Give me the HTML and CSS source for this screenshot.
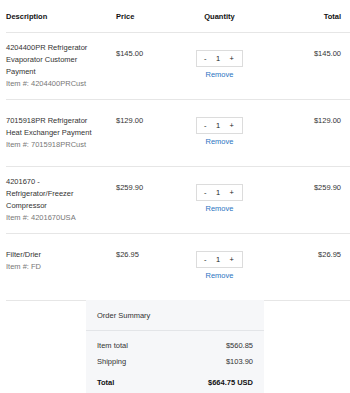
FILE: index.html
```html
<!DOCTYPE html>
<html lang="en">
<head>
  <meta charset="UTF-8" />
  <meta name="viewport" content="width=device-width, initial-scale=1" />
  <title>Cart</title>
  <link rel="stylesheet" href="styles.css">
</head>
<body>
  <div class="cart">
    <div class="row head">
      <div class="desc">Description</div>
      <div class="price">Price</div>
      <div class="qty">Quantity</div>
      <div class="total">Total</div>
    </div>

    <div class="row">
      <div class="desc">
        <div class="name">4204400PR Refrigerator Evaporator Customer Payment</div>
        <div class="sku">Item #: 4204400PRCust</div>
      </div>
      <div class="price">$145.00</div>
      <div class="qty">
        <div class="stepper"><span>-</span><span>1</span><span>+</span></div>
        <a href="#" class="remove">Remove</a>
      </div>
      <div class="total">$145.00</div>
    </div>

    <div class="row">
      <div class="desc">
        <div class="name">7015918PR Refrigerator Heat Exchanger Payment</div>
        <div class="sku">Item #: 7015918PRCust</div>
      </div>
      <div class="price">$129.00</div>
      <div class="qty">
        <div class="stepper"><span>-</span><span>1</span><span>+</span></div>
        <a href="#" class="remove">Remove</a>
      </div>
      <div class="total">$129.00</div>
    </div>

    <div class="row">
      <div class="desc">
        <div class="name">4201670 - Refrigerator/Freezer Compressor</div>
        <div class="sku">Item #: 4201670USA</div>
      </div>
      <div class="price">$259.90</div>
      <div class="qty">
        <div class="stepper"><span>-</span><span>1</span><span>+</span></div>
        <a href="#" class="remove">Remove</a>
      </div>
      <div class="total">$259.90</div>
    </div>

    <div class="row">
      <div class="desc">
        <div class="name">Filter/Drier</div>
        <div class="sku">Item #: FD</div>
      </div>
      <div class="price">$26.95</div>
      <div class="qty">
        <div class="stepper"><span>-</span><span>1</span><span>+</span></div>
        <a href="#" class="remove">Remove</a>
      </div>
      <div class="total">$26.95</div>
    </div>
  </div>

  <div class="summary">
    <div class="summary-title">Order Summary</div>
    <div class="summary-body">
      <div class="line"><span>Item total</span><span>$560.85</span></div>
      <div class="line"><span>Shipping</span><span>$103.90</span></div>
      <div class="line grand"><span>Total</span><span>$664.75 USD</span></div>
    </div>
  </div>
</body>
</html>
```

FILE: styles.css
```css
* {
  margin: 0;
  padding: 0;
  box-sizing: border-box;
}

body {
  font-family: 'Liberation Sans', Arial, sans-serif;
  font-size: 7.5px;
  line-height: 12px;
  color: #333;
  background: #fff;
}

.cart {
  padding-left: 6px;
}

.row {
  display: grid;
  grid-template-columns: 110px 54px 99px 1fr;
  align-items: center;
  min-height: 67px;
  padding: 9px 9px 9px 0;
  border-bottom: 1px solid #e6e6e6;
}

.row.head {
  min-height: 0;
  height: 33px;
  padding-top: 11px;
  padding-bottom: 10px;
  align-items: start;
  font-weight: bold;
  color: #111;
}

.row > div {
  min-height: 36px;
}

.row.head > div {
  min-height: 0;
}

.desc {
  padding-right: 18px;
}

.sku {
  color: #777;
}

.qty {
  display: flex;
  flex-direction: column;
  align-items: center;
}

.row:not(.head) .qty {
  padding-top: 2px;
}

.total {
  text-align: right;
}

.stepper {
  display: flex;
  justify-content: space-between;
  align-items: center;
  width: 47px;
  height: 17px;
  padding: 0 8px 0 7px;
  border: 1px solid #dcdcdc;
  background: #fff;
  color: #222;
}

.remove {
  color: #2b74c2;
  text-decoration: none;
  margin-top: 2px;
}

.summary {
  width: 178px;
  margin-left: 86px;
  margin-top: -1px;
  background: #f6f7f9;
  padding-bottom: 4px;
}

.summary-title {
  padding: 10px 11px 8px;
  border-bottom: 1px solid #e3e5e8;
}

.summary-body {
  padding: 9px 11px 0;
}

.line {
  display: flex;
  justify-content: space-between;
  height: 16px;
}

.line.grand {
  margin-top: 5px;
  font-weight: bold;
  color: #111;
}
```
